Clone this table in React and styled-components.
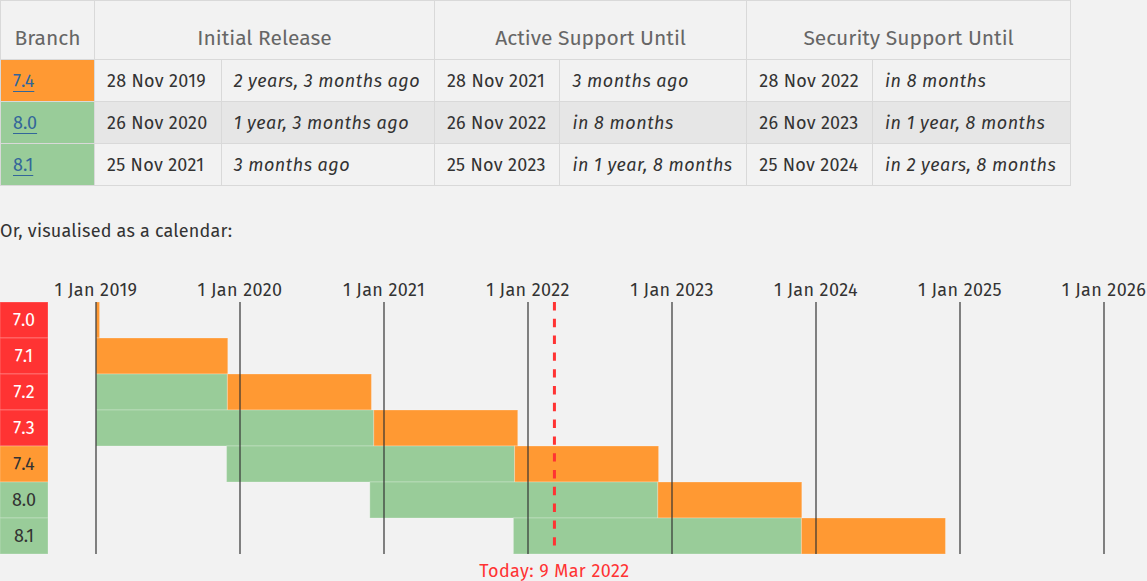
import React from "react";
import styled, { createGlobalStyle } from "styled-components";

const GlobalStyle = createGlobalStyle`
  html, body {
    margin: 0;
    padding: 0;
    background: #f2f2f2;
  }
  body {
    font-family: "Fira Sans", "Open Sans", "Liberation Sans", sans-serif;
    color: #333;
  }
`;

const Page = styled.div`
  width: 1147px;
  height: 581px;
  overflow: hidden;
  background: #f2f2f2;
`;

const Table = styled.table`
  border-collapse: collapse;
  width: 1071px;
  font-size: 18px;
`;

const HeadCell = styled.th`
  height: 59px;
  padding: 0 12px 8px;
  border: 1px solid #d9d9d9;
  font-weight: 400;
  font-size: 21px;
  color: #666;
  text-align: center;
  vertical-align: bottom;
  box-sizing: border-box;
  width: ${(p) => p.$w || "auto"};
`;

const Row = styled.tr`
  background: ${(p) => (p.$hl ? "#e6e6e6" : "#f2f2f2")};
`;

const Cell = styled.td`
  height: 41px;
  padding: 0 12px;
  border: 1px solid #d9d9d9;
  white-space: nowrap;
  font-style: ${(p) => (p.$italic ? "italic" : "normal")};
  letter-spacing: ${(p) => (p.$italic ? "0.5px" : "0.3px")};
  color: #333;
`;

const BranchCell = styled(Cell)`
  background: ${(p) => (p.$state === "security" ? "#f93" : "#9c9")};
  letter-spacing: 0;
  a {
    color: #369;
    text-decoration: underline;
    text-underline-offset: 4px;
  }
`;

const Caption = styled.p`
  margin: 33px 0 0;
  font-size: 18px;
  line-height: 24px;
  letter-spacing: 0.2px;
  color: #333;
`;

const Calendar = styled.svg`
  display: block;
  margin-top: 27px;
  font-family: "Fira Sans", "Open Sans", "Liberation Sans", sans-serif;
  font-size: 18px;
  letter-spacing: 0.4px;
`;

const rows = [
  {
    branch: "7.4",
    state: "security",
    initial: ["28 Nov 2019", "2 years, 3 months ago"],
    active: ["28 Nov 2021", "3 months ago"],
    security: ["28 Nov 2022", "in 8 months"],
  },
  {
    branch: "8.0",
    state: "stable",
    hl: true,
    initial: ["26 Nov 2020", "1 year, 3 months ago"],
    active: ["26 Nov 2022", "in 8 months"],
    security: ["26 Nov 2023", "in 1 year, 8 months"],
  },
  {
    branch: "8.1",
    state: "stable",
    initial: ["25 Nov 2021", "3 months ago"],
    active: ["25 Nov 2023", "in 1 year, 8 months"],
    security: ["25 Nov 2024", "in 2 years, 8 months"],
  },
];

const branches = [
  { v: "7.0", state: "eol", start: [2015, 12, 3], active: [2017, 12, 3], end: [2019, 1, 10] },
  { v: "7.1", state: "eol", start: [2016, 12, 1], active: [2018, 12, 1], end: [2019, 12, 1] },
  { v: "7.2", state: "eol", start: [2017, 11, 30], active: [2019, 11, 30], end: [2020, 11, 30] },
  { v: "7.3", state: "eol", start: [2018, 12, 6], active: [2020, 12, 6], end: [2021, 12, 6] },
  { v: "7.4", state: "security", start: [2019, 11, 28], active: [2021, 11, 28], end: [2022, 11, 28] },
  { v: "8.0", state: "stable", start: [2020, 11, 26], active: [2022, 11, 26], end: [2023, 11, 26] },
  { v: "8.1", state: "stable", start: [2021, 11, 25], active: [2023, 11, 25], end: [2024, 11, 25] },
];

const colours = { eol: "#f33", security: "#f93", stable: "#9c9" };

const LEFT = 96;
const YEAR = 144;
const TOP = 32;
const ROW_H = 36;

function xFor([y, m, d]) {
  if (y < 2019) return LEFT;
  const start = Date.UTC(y, 0, 1);
  const len = (Date.UTC(y + 1, 0, 1) - start) / 86400000;
  const day = (Date.UTC(y, m - 1, d) - start) / 86400000;
  return LEFT + (y - 2019) * YEAR + (day / len) * YEAR;
}

const years = [2019, 2020, 2021, 2022, 2023, 2024, 2025, 2026];

function CalendarChart() {
  const bottom = TOP + branches.length * ROW_H;
  const today = xFor([2022, 3, 9]);
  return (
    <Calendar width="1147" height="312" viewBox="0 0 1147 312">
      {branches.map((b, i) => {
        const y = TOP + i * ROW_H;
        const s = xFor(b.start);
        const a = xFor(b.active);
        const e = xFor(b.end);
        return (
          <g key={b.v}>
            <rect x="0" y={y} width="48" height={ROW_H} fill={colours[b.state]} stroke="rgba(255,255,255,0.25)" />
            <text
              x="24"
              y={y + 24}
              textAnchor="middle"
              letterSpacing="0"
              fill={b.state === "eol" ? "#fff" : "#333"}
            >
              {b.v}
            </text>
            {a > s && (
              <rect x={s} y={y} width={a - s} height={ROW_H} fill="#9c9" stroke="rgba(255,255,255,0.25)" />
            )}
            <rect x={Math.max(a, s)} y={y} width={e - Math.max(a, s)} height={ROW_H} fill="#f93" stroke="rgba(255,255,255,0.25)" />
          </g>
        );
      })}
      {years.map((yr, i) => {
        const x = LEFT + i * YEAR;
        return (
          <g key={yr}>
            <line x1={x} y1={TOP} x2={x} y2={bottom} stroke="#333" strokeWidth="1.2" />
            <text x={x} y="26" textAnchor="middle" fill="#333">
              1 Jan {yr}
            </text>
          </g>
        );
      })}
      <line
        x1={today}
        y1={TOP}
        x2={today}
        y2={bottom - 8}
        stroke="#f33"
        strokeWidth="3"
        strokeDasharray="8.4 8.4"
      />
      <text x={today} y={bottom + 23} textAnchor="middle" fill="#f33">
        Today: 9 Mar 2022
      </text>
    </Calendar>
  );
}

export default function App() {
  return (
    <Page>
      <GlobalStyle />
      <Table>
        <thead>
          <tr>
            <HeadCell $w="94px">Branch</HeadCell>
            <HeadCell colSpan={2}>Initial Release</HeadCell>
            <HeadCell colSpan={2}>Active Support Until</HeadCell>
            <HeadCell colSpan={2}>Security Support Until</HeadCell>
          </tr>
        </thead>
        <tbody>
          {rows.map((r) => (
            <Row key={r.branch} $hl={r.hl}>
              <BranchCell $state={r.state}>
                <a href="#">{r.branch}</a>
              </BranchCell>
              <Cell>{r.initial[0]}</Cell>
              <Cell $italic>{r.initial[1]}</Cell>
              <Cell>{r.active[0]}</Cell>
              <Cell $italic>{r.active[1]}</Cell>
              <Cell>{r.security[0]}</Cell>
              <Cell $italic>{r.security[1]}</Cell>
            </Row>
          ))}
        </tbody>
      </Table>
      <Caption>Or, visualised as a calendar:</Caption>
      <CalendarChart />
    </Page>
  );
}
